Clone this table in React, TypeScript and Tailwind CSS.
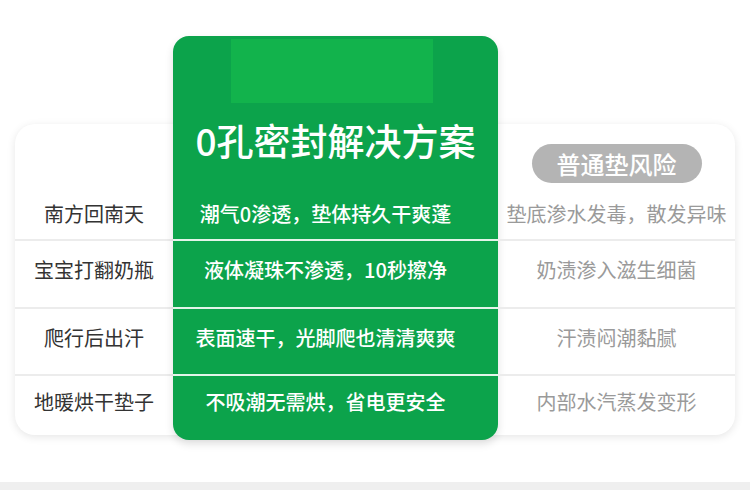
import React from 'react';

const rows = [
  { scene: '南方回南天', ours: '潮气0渗透，垫体持久干爽蓬', risk: '垫底渗水发毒，散发异味', h: 'h-[50px]' },
  { scene: '宝宝打翻奶瓶', ours: '液体凝珠不渗透，10秒擦净', risk: '奶渍渗入滋生细菌', h: 'h-[68px]' },
  { scene: '爬行后出汗', ours: '表面速干，光脚爬也清清爽爽', risk: '汗渍闷潮黏腻', h: 'h-[67px]' },
  { scene: '地暖烘干垫子', ours: '不吸潮无需烘，省电更安全', risk: '内部水汽蒸发变形', h: 'h-[61px]' },
];

export default function App() {
  return (
    <div className="w-[750px] h-[490px] bg-white flex flex-col overflow-hidden font-['Noto_Sans_CJK_SC',sans-serif]">
      <div className="pt-[36px] px-[15px]">
        {/* comparison card */}
        <div className="mt-[88px] flex rounded-[20px] bg-white shadow-[0_2px_8px_rgba(0,0,0,0.10)]">
          {/* scenes */}
          <div className="w-[158px] flex flex-col">
            <div className="h-[65px]" />
            {rows.map((r, i) => (
              <div
                key={r.scene}
                className={`${r.h} flex items-center justify-center text-[20px] text-[#333333] ${i > 0 ? 'border-t-2 border-[#ececec] pb-[8px]' : ''}`}
              >
                {r.scene}
              </div>
            ))}
          </div>

          {/* our solution */}
          <div className="w-[325px] -mt-[88px] -mb-[5px] rounded-[16px] bg-[#0ca34b] flex flex-col shadow-[0_4px_8px_rgba(0,0,0,0.12)]">
            <div className="h-[153px] flex flex-col">
              <div className="mt-[3px] ml-[58px] w-[202px] h-[64px] bg-[#12b34c]" />
              <div className="mt-[17px] text-center text-white text-[37px] leading-[40px] font-medium">
                0孔密封解决方案
              </div>
            </div>
            {rows.map((r, i) => (
              <div
                key={r.ours}
                className={`${i === 3 ? 'h-[66px] pb-[13px]' : r.h} ${i === 1 || i === 2 ? 'pb-[8px]' : ''} flex items-center justify-center pr-[20px] text-[20px] text-white font-medium ${i > 0 ? 'border-t-2 border-[#e3f4e9]' : ''}`}
              >
                {r.ours}
              </div>
            ))}
          </div>

          {/* risks */}
          <div className="flex-1 flex flex-col">
            <div className="h-[65px] pt-[20px] flex justify-center">
              <div className="w-[170px] h-[39px] rounded-full bg-[#b4b4b4] flex items-center justify-center text-white text-[24px] font-medium">
                普通垫风险
              </div>
            </div>
            {rows.map((r, i) => (
              <div
                key={r.risk}
                className={`${r.h} flex items-center justify-center text-[20px] text-[#9a9a9a] ${i > 0 ? 'border-t-2 border-[#ececec] pb-[8px]' : ''}`}
              >
                {r.risk}
              </div>
            ))}
          </div>
        </div>
      </div>
      <div className="mt-auto h-[8px] bg-[#efefef]" />
    </div>
  );
}
